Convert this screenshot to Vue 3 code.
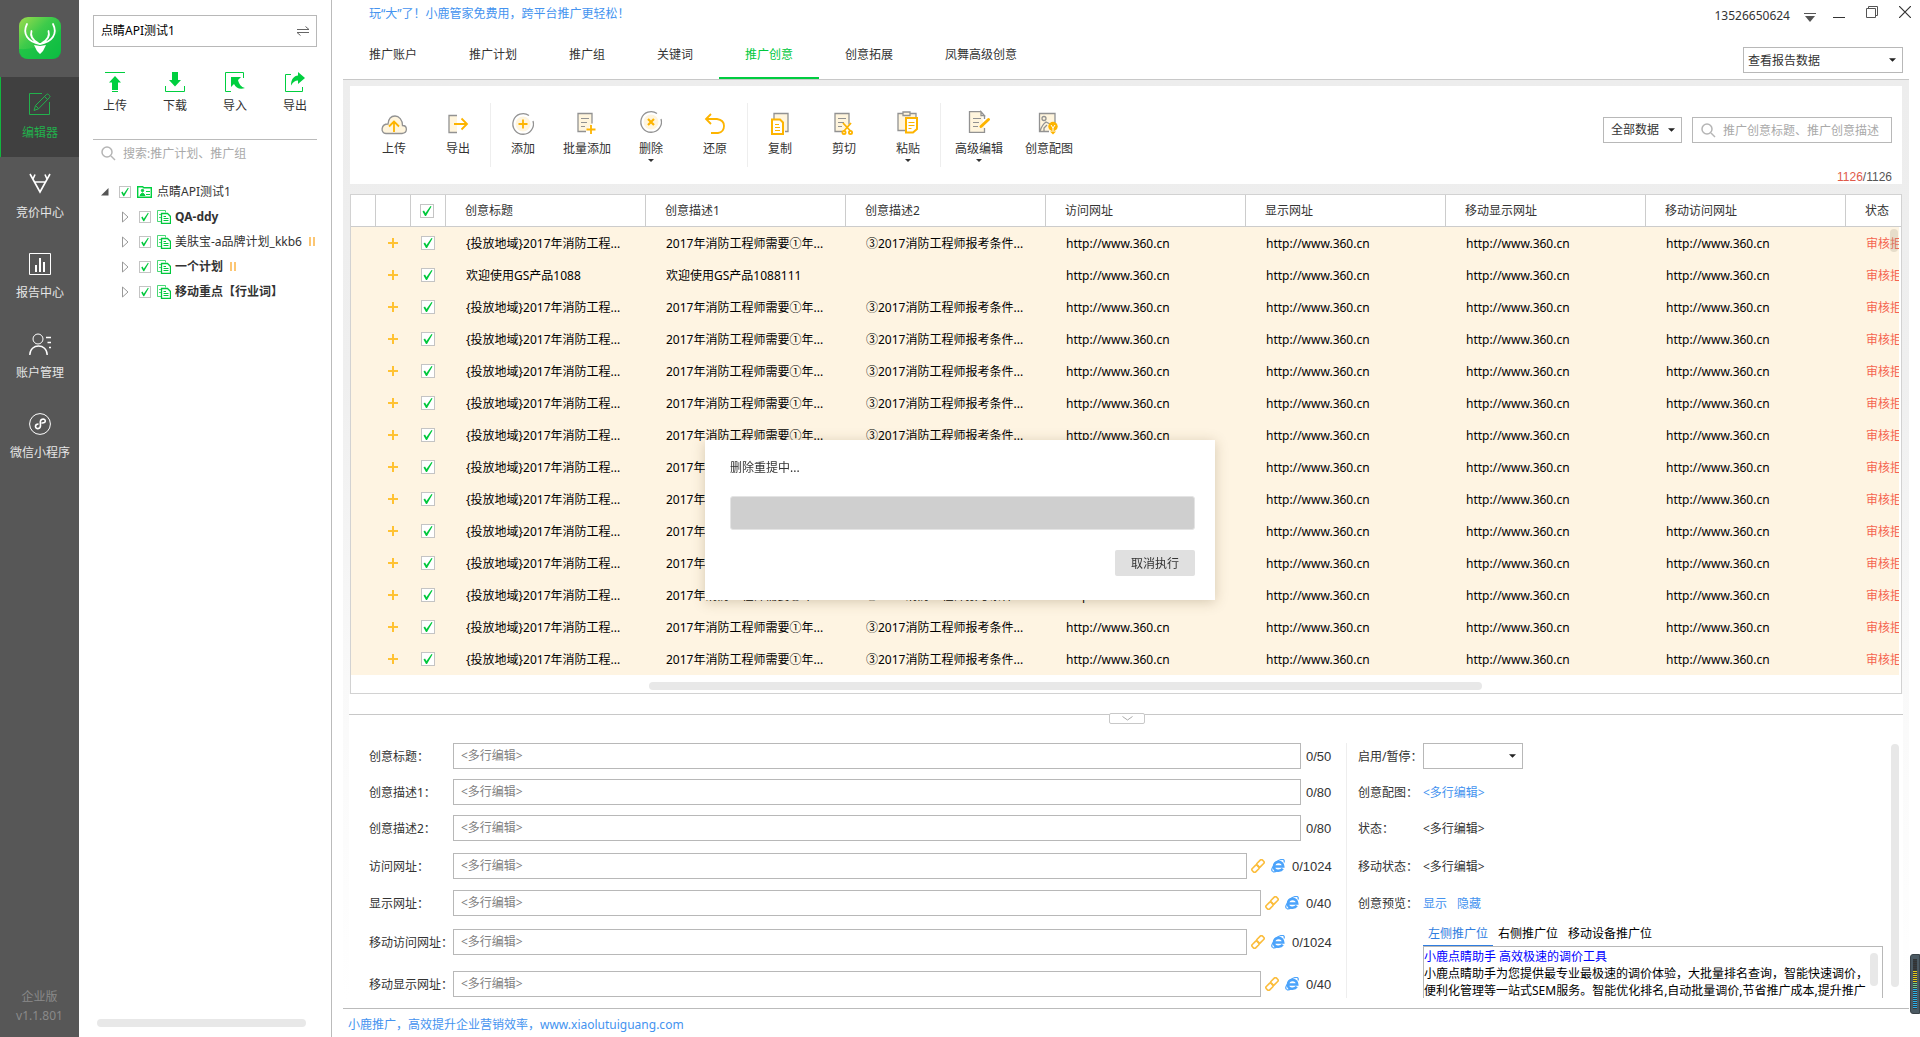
<script setup>
import { ref } from 'vue'

const navIcons = {
  edit: '<path d="M13 .5H.5v21h20V9"/><path d="M5 17.500l1.500-5L17.500 1.500q1-1 2 0l1 1q1 1 0 2L9.500 15.800zM6.500 12.500l3 3M15.500 3.500l3 3"/>',
  bid: '<path stroke-width="1.600" d="M1 1l10 18L21 1M6 1.500L4 6M16 1.500L18 6M5 9h12"/>',
  report: '<path d="M.5.5h21v21H.5z"/><path stroke-width="2" d="M7 12v7M11 5v14M15 9v10"/>',
  account: '<circle cx="9" cy="6" r="5"/><path stroke-width="1.400" d="M.8 22c0-12 17.400-12 17.400 0M17 4.500h5M18.500 9.500H22M20 14.500h2"/>',
  mini: '<circle cx="11" cy="11" r="10.400"/><path stroke-width="1.600" d="M12.500 10c6 .5 4-5.500 0-3.500-2 1.200-1 4-1 6 0 4-5 4-5 1 0-2 1.500-2.500 3-2.500"/>'
}
const nav = [
  { label: '编辑器', icon: 'edit', active: true },
  { label: '竞价中心', icon: 'bid' },
  { label: '报告中心', icon: 'report' },
  { label: '账户管理', icon: 'account' },
  { label: '微信小程序', icon: 'mini' }
]

const sideActions = [
  { label: '上传', icon: '<path d="M0 .5h20M7 19.500h6" stroke="#00cf3f"/><path fill="#00cf3f" d="M10 4l6 6.500h-3V18H7v-7.500H4z"/>' },
  { label: '下载', icon: '<path d="M.5 14v5.500h19V14" stroke="#00cf3f" fill="none"/><path fill="#00cf3f" d="M7 0h6v8h3l-6 6.500L4 8h3z"/>' },
  { label: '导入', icon: '<path d="M6 19.500H.5V.5h18V6" stroke="#00cf3f" fill="none"/><path fill="#00cf3f" d="M6 5h10l-3 3c1 4 3 7 7 8-5 2-9 0-11-4l-3 3z"/>' },
  { label: '导出', icon: '<path d="M6 2.500H.5v17h17V15" stroke="#00cf3f" fill="none"/><path fill="#00cf3f" d="M13 0l7 6-7 6V8.500c-3 0-5 1.500-7 5C6 7 9 4 13 3.500z"/>' }
]

const plans = [
  { name: 'QA-ddy', bold: true },
  { name: '美肤宝-a品牌计划_kkb6', paused: true },
  { name: '一个计划', bold: true, paused: true },
  { name: '移动重点【行业词】', bold: true }
]

const tabs = ['推广账户', '推广计划', '推广组', '关键词', '推广创意', '创意拓展', '凤舞高级创意']
const activeTab = ref('推广创意')

const g = 'stroke="#929292" stroke-width="1.300" fill="#fff5dd"'
const y = 'stroke="#fdb400" stroke-width="1.800" fill="none"'
const toolGroups = [
  [
    { label: '上传', icon: `<path ${g} d="M5 22.500h16c6-.5 5.500-8 .500-8C21.500 9 18 5 14 5S7.500 8 7 13c-7 0-8 9-2 9.500z"/><path ${y} d="M13 21V11M8 15.500l5-5 5 5"/>` },
    { label: '导出', icon: `<path ${g} d="M12 4.500H4v17h8"/><path ${y} d="M9 13h13M16.500 7.500L22 13l-5.500 5.500"/>` }
  ],
  [
    { label: '添加', icon: `<circle cx="13" cy="13" r="7.500" fill="#fff5dd"/><path ${g} style="fill:none" d="M19 4.500a10.300 10.300 0 1 0 4 5.500"/><path ${y} d="M13 8.500v9M8.500 13h9"/>` },
    { label: '批量添加', icon: `<path ${g} d="M12 20.500H4v-18h14v10"/><path stroke="#929292" d="M7 7.500h8M7 11.500h6M7 15.500h4"/><path ${y} d="M17 14v9M12.500 18.500h9"/>` },
    { label: '删除', caret: true, icon: `<circle cx="13" cy="11" r="7.500" fill="#fff5dd"/><path ${g} style="fill:none" d="M19 2.500a10.300 10.300 0 1 0 4 5.500"/><path ${y} style="stroke-width:2.200" d="M10 8l6 6M16 8l-6 6"/>` },
    { label: '还原', icon: `<path ${y} d="M9 3L4 8l5 5M4 8h11q7 1 7 7 0 6-6 7H9"/>` }
  ],
  [
    { label: '复制', icon: `<path ${g} d="M7 8V2.500h14v18h-3"/><path stroke="#fdb400" stroke-width="2" fill="#fff" d="M5 8.500h8l3 3V23H5z"/><path stroke="#fdb400" d="M8 13.500h4M8 16.500h5M8 19.500h5"/>` },
    { label: '剪切', icon: `<path ${g} d="M11 20.500H4v-18h14v11"/><path stroke="#929292" d="M7 7.500h8M7 11.500h6M7 15.500h4"/><path ${y} d="M12 12l7.500 8M20 12l-7 8"/><circle ${y} cx="13" cy="21.500" r="1.600"/><circle ${y} cx="19.500" cy="21.500" r="1.600"/>` },
    { label: '粘贴', caret: true, icon: `<path ${g} d="M12 19.500H3v-17h18v6"/><path ${g} d="M8 1h7v3.500H8z"/><path stroke="#fdb400" stroke-width="2" fill="#fff" d="M11 7h11v11l-4 3.500h-7z"/><path stroke="#fdb400" d="M13.500 11.500h6M13.500 14.500h6M13.500 17.500h3"/>` }
  ],
  [
    { label: '高级编辑', caret: true, wide: true, icon: `<path ${g} d="M15 .7H3.500v20.600h15V17M15 .7v4h3.500zl3.500 4V8"/><path stroke="#929292" d="M7 7.500h8M7 11.500h6M7 15.500h5"/><path stroke="#fdb400" stroke-width="3" stroke-linecap="round" d="M15 15.500l7.500-7"/>` },
    { label: '创意配图', icon: `<path ${g} d="M19 13V2.500H3.500v18H13"/><circle ${g} cx="8" cy="7.500" r="2"/><path ${g} style="fill:none" d="M4 20q2-6 6-9l4 2M8 20v-3l3-3"/><circle cx="17" cy="15.500" r="4.700" fill="#fdb400"/><path fill="#fdb400" d="M14 20.500h6l-3 3z"/><path stroke="#fff" fill="none" d="M15 14l2 3 2-3M17 17v3"/>` }
  ]
]

const columns = ['创意标题', '创意描述1', '创意描述2', '访问网址', '显示网址', '移动显示网址', '移动访问网址']
const url = 'http://www.360.cn'
const rows = Array.from({ length: 14 }, (_, i) => i === 1
  ? ['欢迎使用GS产品1088', '欢迎使用GS产品1088111', '', url, url, url, url]
  : ['{投放地域}2017年消防工程...', '2017年消防工程师需要①年...', '③2017消防工程师报考条件...', url, url, url, url])

const fields = [
  { label: '创意标题：', max: 50 },
  { label: '创意描述1：', max: 80 },
  { label: '创意描述2：', max: 80 },
  { label: '访问网址：', max: 1024, link: true },
  { label: '显示网址：', max: 40, link: true },
  { label: '移动访问网址：', max: 1024, link: true },
  { label: '移动显示网址：', max: 40, link: true }
]
</script>

<template>
  <div class="app">
    <nav class="rail">
      <svg class="logo" viewBox="0 0 42 42">
        <defs>
          <linearGradient id="logoFill" x1="0" y1="0" x2="1" y2="1">
            <stop offset="0" stop-color="#9fdc4e" /><stop offset=".4" stop-color="#3ecb4b" /><stop offset="1" stop-color="#02b83e" />
          </linearGradient>
        </defs>
        <rect width="42" height="42" rx="9" fill="url(#logoFill)" />
        <path d="M0 32Q24 34 42 12v21q0 9-9 9H9q-9 0-9-9z" fill="#10c045" opacity=".6" />
        <path d="M8 7C3 17 9 25 21 27 33 25 39 17 34 7M12.500 14c-1.500 5 1 9 6.500 12M29.500 14c1.500 5-1 9-6.500 12" fill="none" stroke="#fff" stroke-width="1.800" stroke-linecap="round" />
        <path d="M15 28l6 1 6-1-3 6-3 3-3-3z" fill="#fff" />
      </svg>
      <a v-for="n in nav" :key="n.label" href="#" class="rail-item" :class="{ active: n.active }">
        <svg viewBox="0 0 22 22" width="22" height="22" fill="none" stroke="currentColor" v-html="navIcons[n.icon]"></svg>
        <span>{{ n.label }}</span>
      </a>
      <div class="version">企业版<br />v1.1.801</div>
    </nav>

    <aside class="tree-panel">
      <button class="account" type="button">
        <span>点睛API测试1</span>
        <svg width="12" height="10" viewBox="0 0 12 10" fill="none" stroke="#666"><path d="M0 3.500h12L8.500.5M12 6.500H0l3.500 3" /></svg>
      </button>
      <div class="side-actions">
        <button v-for="a in sideActions" :key="a.label" type="button">
          <svg viewBox="0 0 20 20" width="20" height="20" v-html="a.icon"></svg>
          <span>{{ a.label }}</span>
        </button>
      </div>
      <label class="tree-search">
        <svg class="lens" viewBox="0 0 15 15" width="15" height="15"><circle cx="6" cy="6" r="5" /><path d="M10 10l4 4" /></svg>
        <input type="text" placeholder="搜索:推广计划、推广组" aria-label="搜索" />
      </label>
      <ul class="tree">
        <li class="node root">
          <svg width="8" height="8" viewBox="0 0 8 8"><path d="M7.500 0v7.500H0z" fill="#555" /></svg>
          <input type="checkbox" class="tick small" checked aria-label="点睛API测试1" />
          <svg width="15" height="12" viewBox="0 0 15 12" fill="none" stroke="#00cf3f"><path stroke-width="1.400" d="M.7 11.300V.7h5l1 1h7.600v9.600z" /><path d="M9 5.500h4M9 8.500h4" /><circle cx="5.500" cy="4.500" r="1.200" fill="#00cf3f" /><path d="M3 9.500q2.500-5 5 0z" fill="#00cf3f" /></svg>
          <span>点睛API测试1</span>
        </li>
        <li v-for="p in plans" :key="p.name" class="node">
          <svg width="7" height="12" viewBox="0 0 7 12"><path d="M.5 1v10L6 6z" fill="none" stroke="#999" /></svg>
          <input type="checkbox" class="tick small" checked :aria-label="p.name" />
          <svg width="14" height="14" viewBox="0 0 14 14" fill="none" stroke="#00c83c"><path d="M4 11.500H.5V.5h8v2" opacity=".7" /><path opacity=".7" d="M2 4.500h2M2 7.500h2" /><path stroke-width="1.300" d="M4.500 3.500h6l3 3v7h-9z" /><path d="M6.500 6.500H9M6.500 8.500h5M6.500 10.500h5" /></svg>
          <span :class="{ bold: p.bold }">{{ p.name }}</span>
          <i v-if="p.paused" class="pause"></i>
        </li>
      </ul>
      <div class="scroll-x"></div>
    </aside>

    <main class="main">
      <header class="top">
        <div class="title-bar">
          <a href="#" class="promo">玩“大”了！小鹿管家免费用，跨平台推广更轻松！</a>
          <span class="phone">13526650624</span>
          <div class="win-buttons">
            <button type="button" aria-label="菜单"><svg width="12" height="9" viewBox="0 0 12 9"><path d="M0 .5h12" stroke="#555" /><path d="M1 3h10L6 9z" fill="#555" /></svg></button>
            <button type="button" aria-label="最小化"><svg width="12" height="9" viewBox="0 0 12 9"><path d="M0 4.500h12" stroke="#333" /></svg></button>
            <button type="button" class="raised" aria-label="还原窗口"><svg width="12" height="12" viewBox="0 0 12 12" fill="none" stroke="#555"><path d="M.5 2.500h9v9h-9zM2.500 2.500v-2h9v9h-2" /></svg></button>
            <button type="button" class="raised" aria-label="关闭"><svg width="12" height="12" viewBox="0 0 12 12"><path d="M0 0l12 12M12 0L0 12" stroke="#333" stroke-width="1.200" /></svg></button>
          </div>
        </div>
        <div class="tab-row">
          <button v-for="t in tabs" :key="t" type="button" class="tab" :class="{ active: t === activeTab }" @click="activeTab = t">{{ t }}</button>
          <select class="select report" aria-label="报告数据"><option>查看报告数据</option></select>
        </div>
      </header>

      <div class="workspace">
        <section class="toolbar">
          <div v-for="(group, gi) in toolGroups" :key="gi" class="tool-group">
            <button v-for="t in group" :key="t.label" type="button" class="tool" :class="{ wide: t.wide, caret: t.caret }">
              <svg viewBox="0 0 26 24" width="26" height="24" fill="none" v-html="t.icon"></svg>
              <span>{{ t.label }}</span>
            </button>
          </div>
          <div class="filters">
            <select class="select scope" aria-label="数据范围"><option>全部数据</option></select>
            <label class="search">
              <svg class="lens" viewBox="0 0 15 15" width="15" height="15"><circle cx="6" cy="6" r="5" /><path d="M10 10l4 4" /></svg>
              <input type="text" placeholder="推广创意标题、推广创意描述" aria-label="搜索创意" />
            </label>
          </div>
          <div class="count"><b>1126</b>/1126</div>
        </section>

        <section class="grid-box">
          <table>
            <colgroup>
              <col class="c-idx" /><col class="c-sel" /><col class="c-sel" />
              <col v-for="c in columns" :key="c" class="c-data" /><col />
            </colgroup>
            <thead>
              <tr>
                <th></th><th></th>
                <th class="mid"><input type="checkbox" class="tick" checked aria-label="全选" /></th>
                <th v-for="c in columns" :key="c">{{ c }}</th>
                <th>状态</th>
              </tr>
            </thead>
            <tbody>
              <tr v-for="(r, i) in rows" :key="i">
                <td></td>
                <td class="mid"><svg width="10" height="10" viewBox="0 0 10 10"><path d="M5 0v10M0 5h10" stroke="#ffc233" stroke-width="2" /></svg></td>
                <td class="mid"><input type="checkbox" class="tick" checked :aria-label="'选择第' + (i + 1) + '行'" /></td>
                <td v-for="(c, j) in r" :key="j">{{ c }}</td>
                <td class="state"><div>审核拒绝</div></td>
              </tr>
            </tbody>
          </table>
          <div class="thumb-y"></div>
          <div class="table-scroll"><div></div></div>
        </section>

        <section class="detail">
          <button type="button" class="fold" aria-label="收起"><svg width="11" height="5" viewBox="0 0 11 5"><path d="M.5.5l5 3.500 5-3.500" fill="none" stroke="#aaa" /></svg></button>
          <form class="form" @submit.prevent>
            <div class="left">
              <div v-for="(f, i) in fields" :key="f.label" class="field">
                <label :for="'f' + i">{{ f.label }}</label>
                <input :id="'f' + i" type="text" placeholder="<多行编辑>" />
                <template v-if="f.link">
                  <svg class="link" width="14" height="14" viewBox="0 0 14 14" fill="none" stroke="#fbbd3c" stroke-width="1.600"><rect x="5.600" y="2" width="7.600" height="4.800" rx="1.600" transform="rotate(-45 9.400 4.400)" /><rect x=".8" y="7.200" width="7.600" height="4.800" rx="1.600" transform="rotate(-45 4.600 9.600)" /></svg>
                  <svg class="ie" width="14" height="14" viewBox="0 0 14 14" fill="none" stroke="#4ba3fb"><path stroke-width="2.600" d="M3.500 7.500h8.700Q11.800 3 7.500 3T3 7.500t4.500 4.200q3 0 4.200-2" /><path stroke-width="1.200" d="M2 12.500Q-1 12 3 6t9-5.500q1.800.5 1 3M2 12.800q2 .5 4-1" /></svg>
                </template>
                <span class="limit" :class="{ long: f.max > 999 }">0/{{ f.max }}</span>
              </div>
            </div>
            <div class="right">
              <div class="prop"><label for="enable">启用/暂停：</label><select id="enable" class="select enable"><option></option></select></div>
              <div class="prop"><span>创意配图：</span><a href="#">&lt;多行编辑&gt;</a></div>
              <div class="prop"><span>状态：</span><em>&lt;多行编辑&gt;</em></div>
              <div class="prop"><span>移动状态：</span><em>&lt;多行编辑&gt;</em></div>
              <div class="prop"><span>创意预览：</span><a href="#">显示</a><a href="#" class="next">隐藏</a></div>
              <div class="preview">
                <div class="pv-tabs">
                  <button type="button" class="on">左侧推广位</button><button type="button">右侧推广位</button><button type="button">移动设备推广位</button>
                </div>
                <div class="pv-box">
                  <a href="#">小鹿点睛助手 高效极速的调价工具</a>
                  <p>小鹿点睛助手为您提供最专业最极速的调价体验，大批量排名查询，智能快速调价，便利化管理等一站式SEM服务。智能优化排名,自动批量调价,节省推广成本,提升推广</p>
                  <div class="pv-thumb"></div>
                </div>
              </div>
              <div class="right-thumb"></div>
            </div>
          </form>
        </section>
      </div>
      <footer class="foot"><a href="#">小鹿推广，高效提升企业营销效率，www.xiaolutuiguang.com</a></footer>
    </main>

    <div class="meter"><div></div></div>

    <div class="overlay">
      <div class="dialog" role="dialog" aria-label="删除重提中">
        <p>删除重提中...</p>
        <div class="bar" role="progressbar"></div>
        <button type="button">取消执行</button>
      </div>
    </div>
  </div>
</template>

<style>
body { margin: 0; background: #fff; }
</style>

<style scoped>
.app { display: flex; min-height: 100vh; overflow: hidden; font: 12px/16px "Noto Sans", "Noto Sans CJK SC", sans-serif; color: #333; }
.app *, .app *::before, .app *::after { box-sizing: border-box; }
button { font: inherit; color: inherit; background: none; border: 0; padding: 0; margin: 0; }
input, select { font: inherit; color: inherit; margin: 0; border-radius: 0; outline: 0; }
input::placeholder { color: #a9a9a9; opacity: 1; }
a { color: #4493ef; text-decoration: none; }
svg { flex: none; display: block; }
.lens { fill: none; stroke: #b5b5b5; stroke-width: 1.5; }

.rail { flex: none; width: 79px; background: #575757; display: flex; flex-direction: column; align-items: center; }
.logo { width: 42px; height: 42px; margin: 17px 0 18px; }
.rail-item { width: 79px; height: 80px; padding-top: 16px; display: flex; flex-direction: column; align-items: center; gap: 10px; color: #fff; border-left: 1px solid transparent; }
.rail-item span { color: #e6e6e6; }
.rail-item.active { background: #404040; border-color: #12b53f; color: #22b14c; }
.rail-item.active span { color: #22b14c; }
.version { margin-top: auto; padding-bottom: 12px; line-height: 19px; color: #8a8a8a; text-align: center; }

.tree-panel { flex: none; width: 253px; border-right: 1px solid #bbb; padding: 15px 14px 10px; display: flex; flex-direction: column; }
.account { height: 32px; border: 1px solid #b8b8b8; padding: 0 7px; display: flex; align-items: center; justify-content: space-between; color: #000; }
.side-actions { display: flex; justify-content: space-between; padding: 25px 10px 0; height: 92px; }
.side-actions button { display: flex; flex-direction: column; align-items: center; gap: 6px; align-self: flex-start; }
.tree-search { border-top: 1px solid #bbb; height: 28px; display: flex; align-items: center; padding-left: 8px; gap: 7px; }
.tree-search input { border: 0; padding: 0; flex: 1; min-width: 0; }
.tree { list-style: none; margin: 0; padding: 12px 0 0; overflow: hidden; }
.node { display: flex; align-items: center; height: 25px; padding-left: 29px; white-space: nowrap; }
.node .tick { margin: 0 6px 0 10px; }
.node span { margin-left: 4px; }
.node.root { padding-left: 8px; }
.node.root span { margin-left: 5px; }
.bold { font-weight: 700; }
.pause { flex: none; width: 6px; height: 9px; margin-left: 7px; border: solid #fcc673; border-width: 0 2px; }
.scroll-x { margin: auto 11px 0 4px; height: 8px; border-radius: 4px; background: #e8e8e8; }

.tick { appearance: none; flex: none; width: 14px; height: 14px; border: 1px solid #c4c4c4; background: #fff url("data:image/svg+xml,%3Csvg xmlns='http://www.w3.org/2000/svg' viewBox='0 0 12 12'%3E%3Cpath d='M1.500 6.500L3 5.500l1.500 2.500L9.500 1l1 .5L5 11H4z' fill='%2300c83c'/%3E%3C/svg%3E") center / 100% no-repeat; }
.tick.small { width: 12px; height: 12px; }

.main { flex: 1; min-width: 0; display: flex; flex-direction: column; padding: 0 11px 0 11px; }
.top { border-bottom: 1px solid #c8c8c8; }
.title-bar { display: flex; align-items: flex-start; height: 37px; padding: 6px 0 0 26px; margin-right: -2px; }
.phone { margin: 2px 14px 0 auto; }
.win-buttons { display: flex; gap: 21px; padding-top: 5px; }
.win-buttons button { height: 12px; width: 12px; }
.win-buttons button:first-child { margin-right: -4px; }
.win-buttons .raised { position: relative; top: -5px; }
.tab-row { display: flex; height: 42px; align-items: stretch; padding-right: 6px; }
.tab { padding: 0 26px 4px; white-space: nowrap; border-bottom: 2px solid transparent; }
.tab.active { color: #00c83c; border-color: #00cc40; }
.select { appearance: none; height: 26px; border: 1px solid #b8b8b8; background: #fff url("data:image/svg+xml,%3Csvg xmlns='http://www.w3.org/2000/svg' viewBox='0 0 8 4'%3E%3Cpath d='M0 0h8L4 4z' fill='%23222'/%3E%3C/svg%3E") right 6px center / 7px 4px no-repeat; }
.report { width: 160px; margin: 10px 0 0 auto; padding: 1px 4px 0; }

.workspace { background: linear-gradient(#ededed, #efefef 300px, #f9f9f9 600px, #fff 920px); padding: 6px 6px 0; }
.toolbar { position: relative; height: 98px; margin: 0 1px; background: #fff; display: flex; align-items: flex-start; padding: 17px 10px 0 12px; }
.tool-group { display: flex; height: 64px; }
.tool-group:not(:nth-child(4)) { border-right: 1px solid #eee; }
.tool { position: relative; width: 64px; padding-top: 8px; display: flex; flex-direction: column; align-items: center; gap: 6px; }
.tool.wide { width: 76px; }
.tool svg { overflow: visible; }
.tool.caret::after { content: ""; position: absolute; top: 56px; border: 3px solid transparent; border-top-color: #333; }
.filters { margin: 14px 0 0 auto; display: flex; gap: 10px; }
.scope { width: 79px; padding: 0 7px; }
.search { width: 200px; height: 26px; border: 1px solid #b8b8b8; display: flex; align-items: center; gap: 7px; padding-left: 8px; }
.search input { flex: 1; min-width: 0; padding: 1px 0 0; border: 0; }
.count { position: absolute; right: 10px; top: 83px; color: #555; font-family: "Liberation Sans", Arial, sans-serif; line-height: 16px; }
.count b { font-weight: 400; color: #e05a4a; }

.grid-box { position: relative; margin: 10px 1px 0; background: #fff; border: 1px solid #d2d2d2; }
table { width: 100%; table-layout: fixed; border-collapse: separate; border-spacing: 0; }
.c-idx { width: 25px; }
.c-sel { width: 35px; }
.c-data { width: 200px; }
th, td { height: 32px; padding: 0 0 0 20px; text-align: left; font-weight: 400; white-space: nowrap; }
th { border: solid #ccc; border-width: 0 1px 1px 0; padding-left: 19px; }
th:last-child { border-right: 0; }
td { padding-top: 2px; background: #fef4e2; color: #000; }
td.mid { padding: 0 1px 0 0; }
th.mid { padding: 0 3px 0 0; }
.mid > * { margin: 0 auto; display: block; }
td.state { border-right: 2px solid #fff; color: #f56450; }
td.state div { overflow: hidden; }
.thumb-y { position: absolute; right: 3px; top: 34px; width: 8px; height: 23px; border-radius: 4px; background: rgba(160, 150, 130, .25); }
.table-scroll { height: 18px; padding: 7px 0 0; }
.table-scroll div { width: 833px; height: 8px; margin: 0 0 0 298px; border-radius: 4px; background: #e8e8e8; }

.detail { position: relative; background: #fff; padding-top: 20px; }
.form { border-top: 1px solid #c8c8c8; padding-top: 28px; display: grid; grid-template-columns: minmax(0, 1fr) 557px; height: 294px; }
.fold { position: absolute; left: 760px; top: 19px; width: 36px; height: 11px; border: 1px solid #c8c8c8; border-radius: 2px; background: #fff; display: flex; align-items: center; justify-content: center; }
.left, .right { display: grid; grid-template-rows: 36px 36px 38px 37px 39px 42px 26px; }
.left { padding: 0 14px 0 20px; }
.field, .prop { display: flex; align-items: center; height: 26px; }
.field label { width: 84px; flex: none; white-space: nowrap; padding-top: 2px; }
.field input { flex: 1; min-width: 0; height: 26px; border: 1px solid #b8b8b8; padding: 0 7px 1px; }
.field input::placeholder { color: #808080; }
.link { margin: 0 6px 0 4px; }
.ie { margin-right: 2px; }
.limit { width: 26px; margin-left: 5px; padding-top: 1px; font: 13px/16px "Liberation Sans", Arial, sans-serif; white-space: nowrap; }
.limit.long { width: 40px; }
.right { position: relative; border-left: 1px solid #eee; padding-left: 11px; height: 255px; overflow: hidden; }
.prop > :first-child { width: 65px; flex: none; white-space: nowrap; }
.prop span, .prop label, .prop a, .prop em { padding-top: 2px; }
.prop em { font-style: normal; }
.prop .next { margin-left: 10px; }
.enable { width: 100px; }
.preview { margin: -3px 20px 0 65px; grid-row: 6 / 8; }
.pv-tabs { display: flex; height: 20px; color: #000; }
.pv-tabs button { padding: 0 5px 3px; white-space: nowrap; border-bottom: 1px solid transparent; }
.pv-tabs .on { color: #2f7de0; border-color: #2f7de0; }
.pv-box { position: relative; height: 70px; border: 1px solid #b8b8b8; padding-top: 1px; line-height: 17px; padding-right: 14px; color: #000; }
.pv-box a { color: #00f; }
.pv-box p { margin: 0; }
.pv-thumb { position: absolute; right: 4px; top: 6px; width: 8px; height: 33px; border-radius: 4px; background: #e8e8e8; }
.right-thumb { position: absolute; right: 4px; top: 1px; width: 8px; height: 243px; border-radius: 4px; background: #e8e8e8; }
.foot { margin-top: auto; border-top: 1px solid #bbb; padding: 8px 5px 4px; }

.meter { position: fixed; right: 0; bottom: 23px; width: 10px; height: 60px; background: #4b5a63; border: 1px solid #394248; border-radius: 3px 0 0 3px; padding: 4px 2px; }
.meter div { height: 50px; width: 4px; background: repeating-linear-gradient(transparent 0 1px, #333b40 1px 2px), linear-gradient(#333 0 12px, #e6c619 12px 24px, #6fd08c 24px 30px, #2bb0ea 30px); }

.overlay { position: fixed; inset: 0; padding-top: 3px; display: flex; align-items: center; justify-content: center; }
.dialog { width: 510px; height: 160px; background: #fff; box-shadow: 0 2px 12px rgba(90, 70, 30, .25); padding: 20px 20px 24px 25px; display: flex; flex-direction: column; }
.dialog p { margin: 0; }
.bar { height: 34px; margin: 20px 0 20px; background: #cfcfcf; border: 1px solid #e4e4e4; border-radius: 3px; }
.dialog button { align-self: flex-end; width: 80px; height: 26px; padding-top: 1px; background: #e0e0e0; border-radius: 2px; }
</style>
